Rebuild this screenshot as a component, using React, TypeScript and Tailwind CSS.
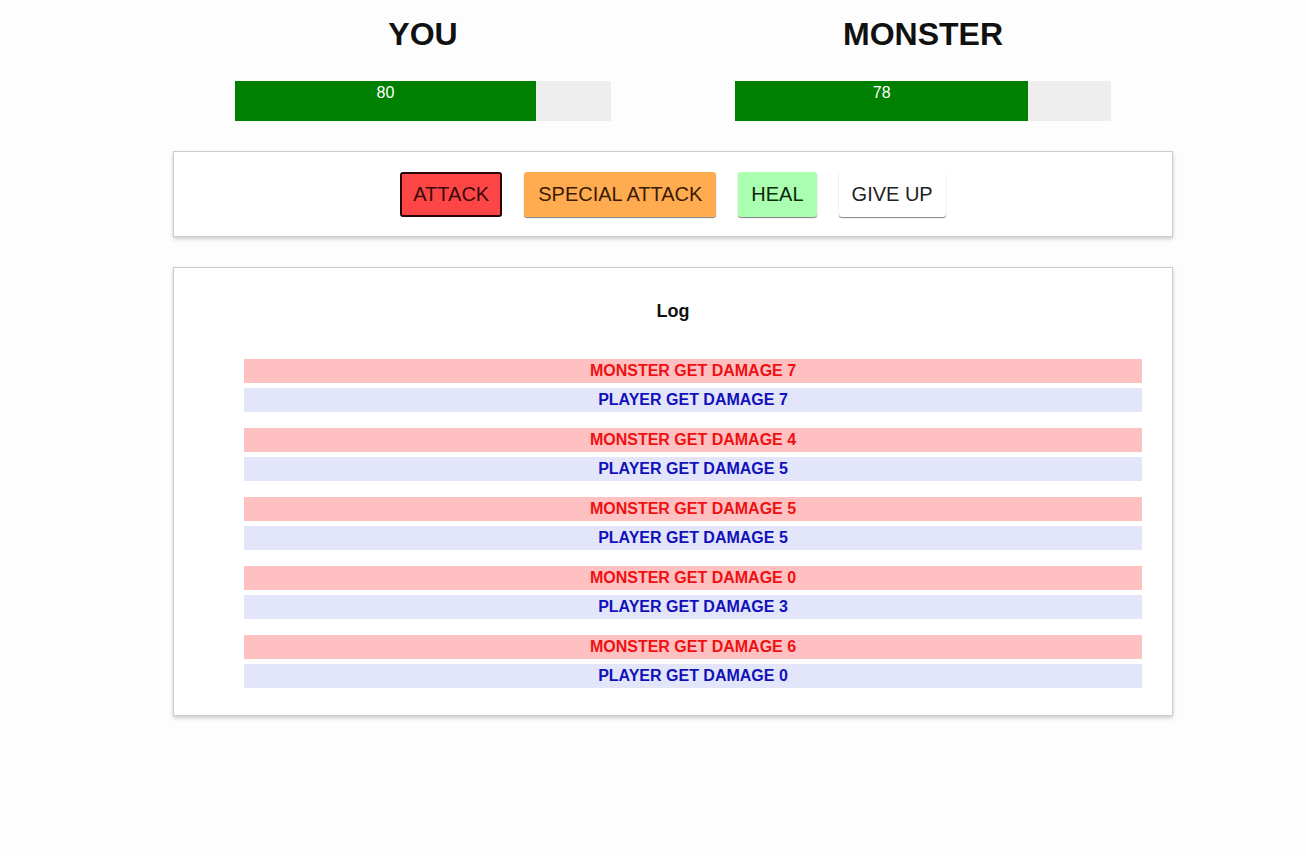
import React from 'react';

const turns = [
  { monster: 7, player: 7 },
  { monster: 4, player: 5 },
  { monster: 5, player: 5 },
  { monster: 0, player: 3 },
  { monster: 6, player: 0 },
];

function HealthBar({ name, value }: { name: string; value: number }) {
  return (
    <div className="w-[500px] flex flex-col items-center">
      <h1 className="text-[32px] leading-[37px] font-bold text-[#111] mt-[16px] mb-[28px]">{name}</h1>
      <div className="w-[376px] h-[40px] bg-[#eeeeee]">
        <div className="h-full bg-[#008000] text-white text-center text-[16px] leading-[24px]" style={{ width: `${value}%` }}>
          {value}
        </div>
      </div>
    </div>
  );
}

export default function App() {
  return (
    <div className="min-h-[856px] bg-[#fdfdfd] font-['Liberation_Sans',Arial,sans-serif]">
      <div className="ml-[173px] w-[1000px] pb-10">
        {/* Health */}
        <div className="flex">
          <HealthBar name="YOU" value={80} />
          <HealthBar name="MONSTER" value={78} />
        </div>

        {/* Controls */}
        <div className="mt-[30px] bg-white border border-[#cccccc] shadow-[0_2px_4px_rgba(0,0,0,0.2)] h-[86px] flex items-center justify-center gap-[22px]">
          <button className="h-[45px] px-[11px] text-[20px] text-[#3a0a0a] bg-[#ff4646] border-2 border-[#2a0505] rounded-[3px]">ATTACK</button>
          <button className="h-[45px] px-[14px] text-[20px] text-[#3a1a05] bg-[#ffab4f] rounded-[3px] shadow-[0_1px_1px_rgba(0,0,0,0.5)]">SPECIAL ATTACK</button>
          <button className="h-[45px] px-[13px] text-[20px] text-[#0a2a0a] bg-[#aaffb0] rounded-[3px] shadow-[0_1px_1px_rgba(0,0,0,0.5)]">HEAL</button>
          <button className="h-[45px] px-[13px] text-[20px] text-[#222] bg-white rounded-[3px] shadow-[0_1px_1px_rgba(0,0,0,0.5)]">GIVE UP</button>
        </div>

        {/* Log */}
        <div className="mt-[30px] bg-white border border-[#cccccc] shadow-[0_2px_4px_rgba(0,0,0,0.2)] px-[30px] pt-[33px] pb-[27px]">
          <h2 className="text-center text-[18px] leading-[20px] font-bold text-[#111]">Log</h2>
          <ul className="mt-[38px] pl-[40px] flex flex-col">
            {turns.map((t, i) => (
              <React.Fragment key={i}>
                <li className={`h-[24px] leading-[24px] text-center text-[16px] font-bold bg-[#ffc0c2] text-[#ee1111] ${i > 0 ? 'mt-[16px]' : ''}`}>
                  MONSTER GET DAMAGE {t.monster}
                </li>
                <li className="mt-[5px] h-[24px] leading-[24px] text-center text-[16px] font-bold bg-[#e3e6fa] text-[#1111bb]">
                  PLAYER GET DAMAGE {t.player}
                </li>
              </React.Fragment>
            ))}
          </ul>
        </div>
      </div>
    </div>
  );
}
